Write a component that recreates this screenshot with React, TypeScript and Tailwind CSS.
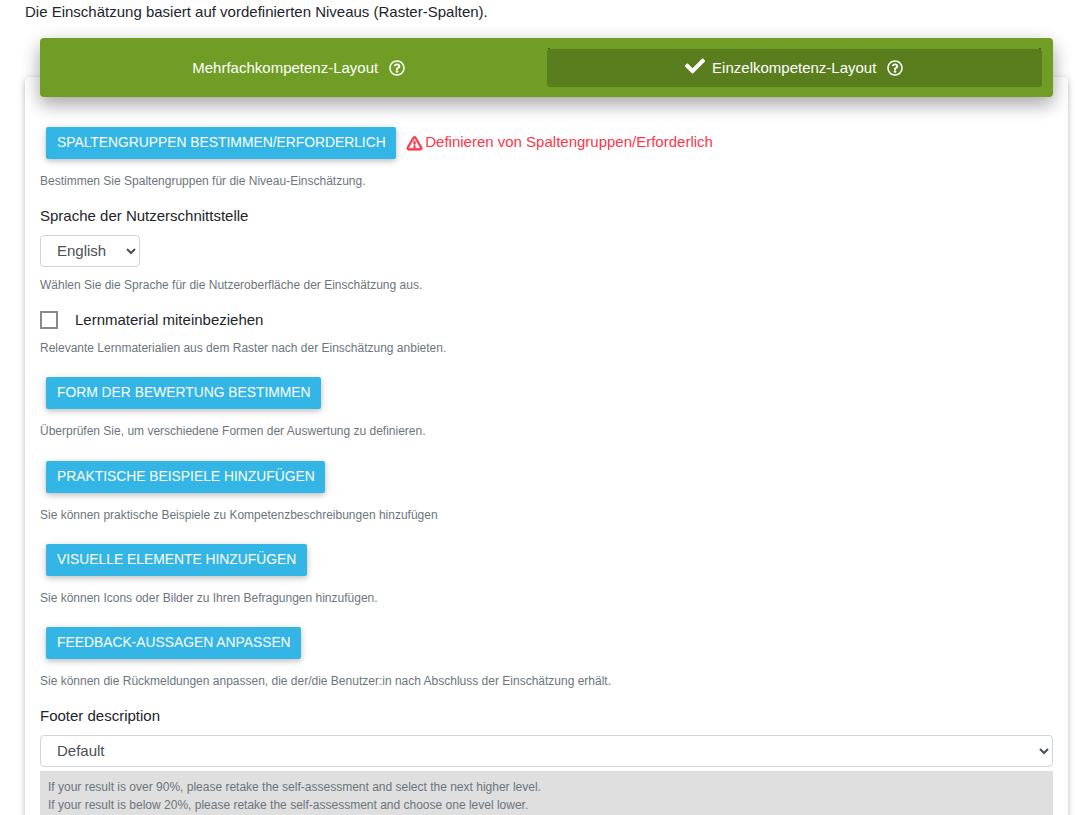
import React from "react";
import {FaCheck, FaRegQuestionCircle} from "react-icons/fa";
import {PiWarningBold} from "react-icons/pi";

const ActionButton = ({label}: {label: string}) => (
    <button className="block h-[32px] ml-[6px] pl-[11px] pr-[10.5px] rounded-[2px] bg-[#33b5e5] text-white text-[13.85px] leading-[30px] pb-[2px] uppercase shadow-[0_2px_5px_rgba(0,0,0,0.16),0_2px_10px_rgba(0,0,0,0.12)]">
        {label}
    </button>
);

const Help = ({children, className = ""}: {children: React.ReactNode; className?: string}) => (
    <p className={`text-[12px] leading-[18px] text-[#6c757d] ${className}`}>{children}</p>
);

const App: React.FC = () => {
    return (
        <div className="h-[815px] overflow-hidden bg-white text-[#212529] font-['Liberation_Sans',Arial,sans-serif]">
            <p className="ml-[25px] text-[15px] leading-[24px]">
                Die Einschätzung basiert auf vordefinierten Niveaus (Raster-Spalten).
            </p>

            <div className="flow-root mt-[53px] ml-[25px] mr-[23px] rounded-[4px] bg-white pl-[15px] pr-[15px] pb-[40px] shadow-[0_2px_5px_rgba(0,0,0,0.16),0_2px_10px_rgba(0,0,0,0.12)]">
                {/* Layout tabs */}
                <div className="relative -mt-[39px] h-[59px] flex rounded-[4px] bg-[#709d26] px-[11px] pt-[11px] text-white text-[15px] shadow-[0_8px_17px_rgba(0,0,0,0.2),0_6px_20px_rgba(0,0,0,0.19)]">
                    <div className="flex-1 h-[38px] flex items-center justify-center gap-[11px]">
                        <span>Mehrfachkompetenz-Layout</span>
                        <FaRegQuestionCircle size={16} />
                    </div>
                    <div className="relative flex-1 h-[38px] flex items-center justify-center rounded-[3px] bg-[#5a7d1e]">
                        <span className="absolute left-[1px] -top-[1px] w-[2px] h-[1px] bg-[#3f5a12]" />
                        <span className="absolute right-[1px] -top-[1px] w-[2px] h-[1px] bg-[#3f5a12]" />
                        <FaCheck size={20} className="mr-[7px] -mt-[4px]" />
                        <span>Einzelkompetenz-Layout</span>
                        <FaRegQuestionCircle size={16} className="ml-[11px]" />
                    </div>
                </div>

                <div className="pt-[30px]">
                    <div className="flex items-center">
                        <ActionButton label="Spaltengruppen bestimmen/erforderlich" />
                        <PiWarningBold size={17} stroke="currentColor" strokeWidth={10} className="ml-[10px] text-[#ff3547]" />
                        <span className="ml-[2px] -mt-[1px] text-[15px] text-[#ff3547]">
                            Definieren von Spaltengruppen/Erforderlich
                        </span>
                    </div>
                    <Help className="mt-[13px]">Bestimmen Sie Spaltengruppen für die Niveau-Einschätzung.</Help>

                    <label className="block mt-[15px] text-[15px] leading-[22px]">Sprache der Nutzerschnittstelle</label>
                    <select className="block mt-[8px] w-[100px] h-[32px] rounded-[4px] border border-[#ced4da] bg-white pl-[12px] pb-[2px] text-[15px] text-[#495057]">
                        <option>English</option>
                    </select>
                    <Help className="mt-[9px]">Wählen Sie die Sprache für die Nutzeroberfläche der Einschätzung aus.</Help>

                    <div className="mt-[16px] flex items-center h-[20px]">
                        <span className="block w-[18px] h-[18px] border-2 border-[#8a8a8a]" />
                        <span className="ml-[17px] text-[15px]">Lernmaterial miteinbeziehen</span>
                    </div>
                    <Help className="mt-[9px]">Relevante Lernmaterialien aus dem Raster nach der Einschätzung anbieten.</Help>

                    <div className="mt-[20px]">
                        <ActionButton label="Form der Bewertung bestimmen" />
                    </div>
                    <Help className="mt-[13px]">Überprüfen Sie, um verschiedene Formen der Auswertung zu definieren.</Help>

                    <div className="mt-[21px]">
                        <ActionButton label="Praktische Beispiele hinzufügen" />
                    </div>
                    <Help className="mt-[13px]">Sie können praktische Beispiele zu Kompetenzbeschreibungen hinzufügen</Help>

                    <div className="mt-[20px]">
                        <ActionButton label="Visuelle Elemente hinzufügen" />
                    </div>
                    <Help className="mt-[13px]">Sie können Icons oder Bilder zu Ihren Befragungen hinzufügen.</Help>

                    <div className="mt-[20px]">
                        <ActionButton label="Feedback-Aussagen anpassen" />
                    </div>
                    <Help className="mt-[13px]">Sie können die Rückmeldungen anpassen, die der/die Benutzer:in nach Abschluss der Einschätzung erhält.</Help>

                    <label className="block mt-[15px] text-[15px] leading-[22px]">Footer description</label>
                    <select className="block mt-[8px] w-full h-[32px] rounded-[4px] border border-[#ced4da] bg-white pl-[12px] pb-[2px] text-[15px] text-[#495057]">
                        <option>Default</option>
                    </select>
                    <div className="mt-[4px] bg-[#dfdfdf] px-[8px] pt-[7px] pb-[6px] text-[12px] leading-[18px] text-[#6c757d]">
                        <p>If your result is over 90%, please retake the self-assessment and select the next higher level.</p>
                        <p>If your result is below 20%, please retake the self-assessment and choose one level lower.</p>
                    </div>
                </div>
            </div>
        </div>
    );
};

export default App;
